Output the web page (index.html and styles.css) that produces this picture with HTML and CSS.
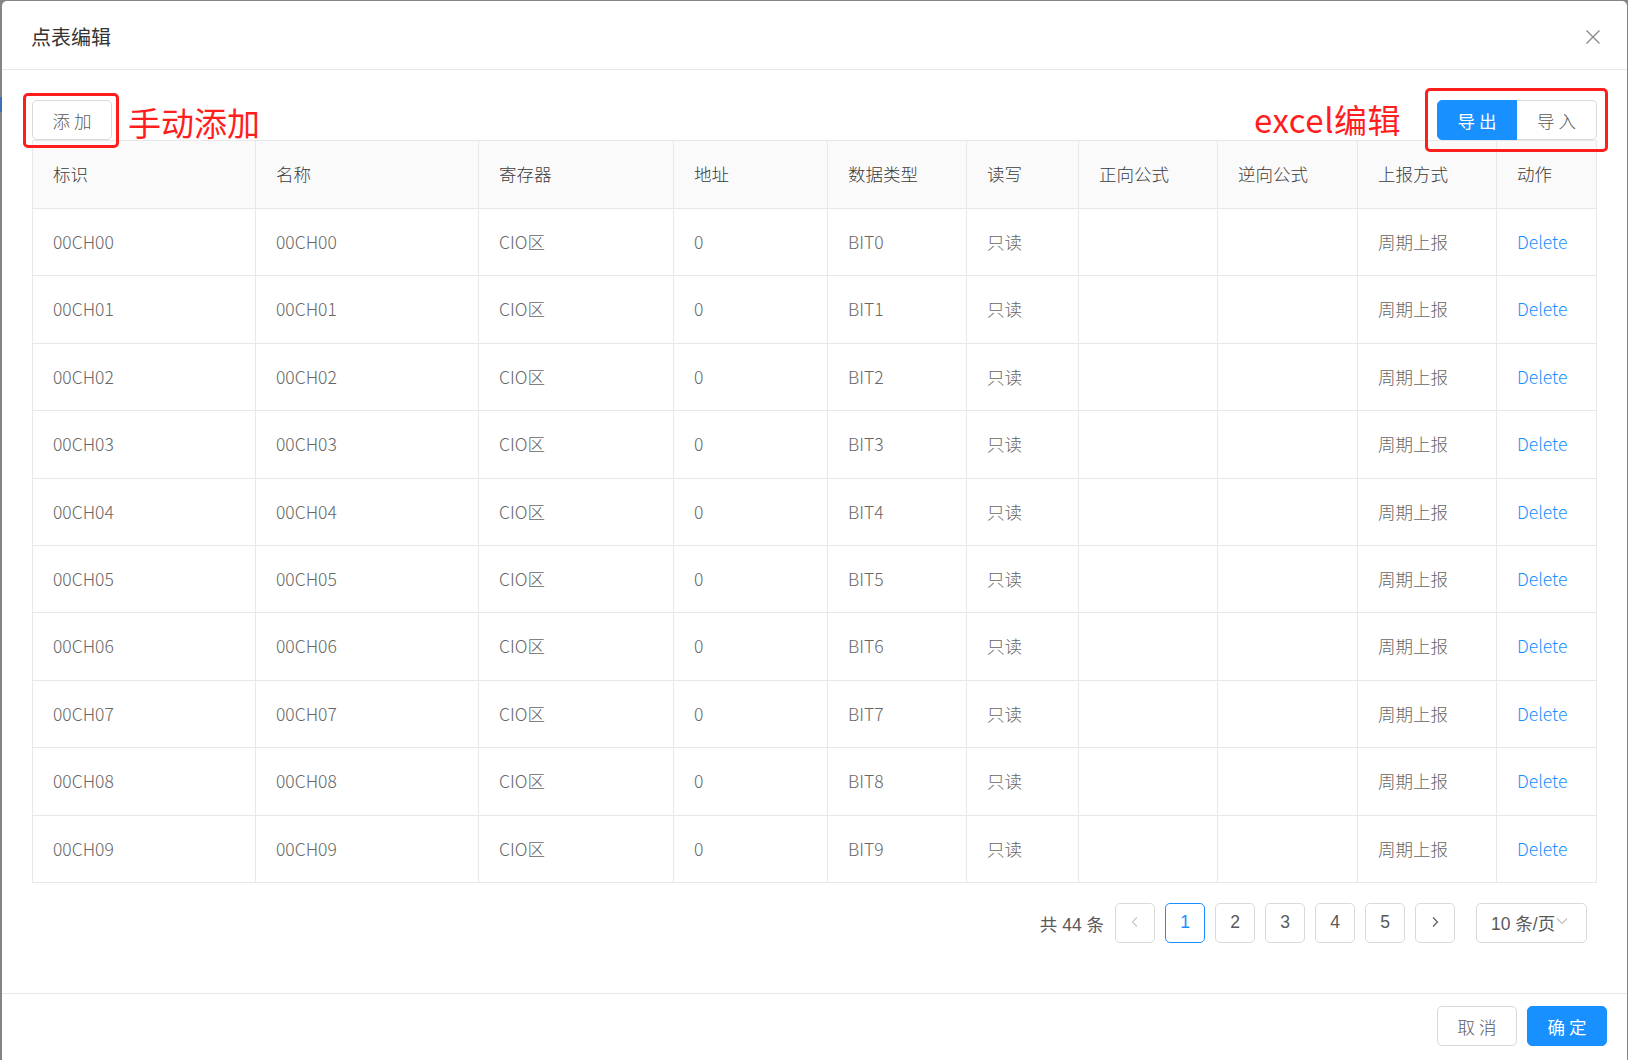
FILE: index.html
```html
<!DOCTYPE html>
<html lang="zh-CN">
<head>
<meta charset="utf-8">
<title>点表编辑</title>
<link rel="stylesheet" href="styles.css">
</head>
<body>
<span class="bg-link"></span>
<div class="modal">
  <div class="modal-header">
    <div class="modal-title">点表编辑</div>
    <button class="modal-close" aria-label="close">
      <svg width="16" height="16" viewBox="0 0 16 16"><path d="M1.5 1.5 L14.5 14.5 M14.5 1.5 L1.5 14.5" stroke="#8c8c8c" stroke-width="1.4" fill="none"/></svg>
    </button>
  </div>
  <div class="modal-body">
    <div class="toolbar">
      <button class="btn">添 加</button>
      <div class="btn-group">
        <button class="btn btn-primary">导 出</button>
        <button class="btn">导 入</button>
      </div>
    </div>
    <table class="grid">
      <colgroup>
        <col style="width:223px"><col style="width:223px"><col style="width:195px"><col style="width:154px"><col style="width:139px"><col style="width:112px"><col style="width:139px"><col style="width:140px"><col style="width:139px"><col>
      </colgroup>
      <thead>
        <tr><th>标识</th><th>名称</th><th>寄存器</th><th>地址</th><th>数据类型</th><th>读写</th><th>正向公式</th><th>逆向公式</th><th>上报方式</th><th>动作</th></tr>
      </thead>
      <tbody>
        <tr><td>00CH00</td><td>00CH00</td><td>CIO区</td><td>0</td><td>BIT0</td><td>只读</td><td></td><td></td><td>周期上报</td><td><a class="link">Delete</a></td></tr>
        <tr><td>00CH01</td><td>00CH01</td><td>CIO区</td><td>0</td><td>BIT1</td><td>只读</td><td></td><td></td><td>周期上报</td><td><a class="link">Delete</a></td></tr>
        <tr><td>00CH02</td><td>00CH02</td><td>CIO区</td><td>0</td><td>BIT2</td><td>只读</td><td></td><td></td><td>周期上报</td><td><a class="link">Delete</a></td></tr>
        <tr><td>00CH03</td><td>00CH03</td><td>CIO区</td><td>0</td><td>BIT3</td><td>只读</td><td></td><td></td><td>周期上报</td><td><a class="link">Delete</a></td></tr>
        <tr><td>00CH04</td><td>00CH04</td><td>CIO区</td><td>0</td><td>BIT4</td><td>只读</td><td></td><td></td><td>周期上报</td><td><a class="link">Delete</a></td></tr>
        <tr><td>00CH05</td><td>00CH05</td><td>CIO区</td><td>0</td><td>BIT5</td><td>只读</td><td></td><td></td><td>周期上报</td><td><a class="link">Delete</a></td></tr>
        <tr><td>00CH06</td><td>00CH06</td><td>CIO区</td><td>0</td><td>BIT6</td><td>只读</td><td></td><td></td><td>周期上报</td><td><a class="link">Delete</a></td></tr>
        <tr><td>00CH07</td><td>00CH07</td><td>CIO区</td><td>0</td><td>BIT7</td><td>只读</td><td></td><td></td><td>周期上报</td><td><a class="link">Delete</a></td></tr>
        <tr><td>00CH08</td><td>00CH08</td><td>CIO区</td><td>0</td><td>BIT8</td><td>只读</td><td></td><td></td><td>周期上报</td><td><a class="link">Delete</a></td></tr>
        <tr><td>00CH09</td><td>00CH09</td><td>CIO区</td><td>0</td><td>BIT9</td><td>只读</td><td></td><td></td><td>周期上报</td><td><a class="link">Delete</a></td></tr>
      </tbody>
    </table>
    <div class="pagination">
      <span class="total">共 44 条</span>
      <span class="page-item disabled">
        <svg width="12" height="14" viewBox="0 0 12 14"><path d="M8 2.5 L3.5 7 L8 11.5" stroke="currentColor" stroke-width="1.2" fill="none"/></svg>
      </span>
      <span class="page-item active">1</span>
      <span class="page-item">2</span>
      <span class="page-item">3</span>
      <span class="page-item">4</span>
      <span class="page-item">5</span>
      <span class="page-item">
        <svg width="12" height="14" viewBox="0 0 12 14"><path d="M4 2.5 L8.5 7 L4 11.5" stroke="currentColor" stroke-width="1.2" fill="none"/></svg>
      </span>
      <span class="size-changer">
        <span>10 条/页</span>
        <svg class="caret" width="12" height="8" viewBox="0 0 12 8"><path d="M1 1.5 L6 6.5 L11 1.5" stroke="#bfbfbf" stroke-width="1.1" fill="none"/></svg>
      </span>
    </div>
  </div>
  <div class="modal-footer">
    <button class="btn">取 消</button>
    <button class="btn btn-primary">确 定</button>
  </div>

  <div class="mark mark-add"></div>
  <div class="mark mark-excel"></div>
  <div class="note note-add">手动添加</div>
  <div class="note note-excel">excel编辑</div>
</div>
</body>
</html>
```

FILE: styles.css
```css
html, body {
  margin: 0;
  padding: 0;
  height: 100%;
}

body {
  background: #858585;
  font-family: "Noto Sans CJK SC", "Noto Sans", sans-serif;
  overflow: hidden;
  position: relative;
}

.bg-link {
  position: absolute;
  left: 0;
  top: 97px;
  width: 2px;
  height: 15px;
  background: #3d6fb4;
}

.modal {
  position: relative;
  margin: 1px 0 0 2px;
  width: 1625px;
  height: 1064px;
  background: #fff;
  border-radius: 5px;
  box-sizing: border-box;
}

.modal-header {
  display: flex;
  align-items: center;
  justify-content: space-between;
  padding: 21px 26px 19px 29px;
  border-bottom: 1px solid #e8e8e8;
  height: 69px;
  box-sizing: border-box;
}

.modal-title {
  font-size: 20px;
  line-height: 27px;
  color: #333;
}

.modal-close {
  border: 0;
  background: none;
  padding: 0;
  margin-top: 2px;
  display: flex;
  cursor: pointer;
}

.modal-body {
  padding: 30px 28px 30px 30px;
}

.toolbar {
  display: flex;
  justify-content: space-between;
  align-items: center;
  height: 40px;
  padding-right: 2px;
}

.btn {
  height: 40px;
  min-width: 80px;
  padding: 0 18px;
  font-family: inherit;
  font-size: 17.5px;
  font-weight: 300;
  color: #595959;
  background: #fff;
  border: 1px solid #d9d9d9;
  border-radius: 5px;
  box-sizing: border-box;
  cursor: pointer;
}

.btn-primary {
  background: #1890ff;
  border-color: #1890ff;
  color: #fff;
  font-weight: 400;
}

.btn-group {
  display: flex;
}

.btn-group .btn:first-child {
  border-top-right-radius: 0;
  border-bottom-right-radius: 0;
}

.btn-group .btn:last-child {
  border-top-left-radius: 0;
  border-bottom-left-radius: 0;
  border-left: 0;
}

.grid {
  width: 1565px;
  border-collapse: collapse;
  table-layout: fixed;
  font-size: 17.5px;
  border: 1px solid #e8e8e8;
}

.grid th,
.grid td {
  border: 1px solid #e8e8e8;
  padding: 20px 20px;
  text-align: left;
  line-height: 26.4px;
  white-space: nowrap;
}

.grid th {
  background: #fafafa;
  color: #3a3a3a;
  font-weight: 300;
  height: 27px;
}

.grid td {
  color: #666;
  font-weight: 300;
}

.link {
  color: #1890ff;
  cursor: pointer;
}

.pagination {
  display: flex;
  justify-content: flex-end;
  align-items: center;
  margin: 20px 0 20px;
  padding-right: 12px;
  font-family: "Liberation Sans", "Noto Sans CJK SC", sans-serif;
  font-size: 17.5px;
  color: #595959;
}

.total {
  margin-right: 11px;
}

.page-item {
  width: 40px;
  height: 40px;
  box-sizing: border-box;
  border: 1px solid #d9d9d9;
  border-radius: 5px;
  display: flex;
  align-items: center;
  justify-content: center;
  margin-right: 10px;
  padding-bottom: 2px;
  color: #595959;
}

.page-item.disabled {
  color: #c8c8c8;
}

.page-item.active {
  border-color: #1890ff;
  color: #1890ff;
}

.size-changer {
  margin-left: 11px;
  width: 111px;
  height: 40px;
  box-sizing: border-box;
  border: 1px solid #d9d9d9;
  border-radius: 5px;
  display: flex;
  align-items: center;
  padding: 0 0 2px 14px;
  color: #595959;
}

.caret {
  margin-left: 1px;
  margin-top: -3px;
}

.modal-footer {
  border-top: 1px solid #e8e8e8;
  padding: 12px 20px;
  display: flex;
  justify-content: flex-end;
  gap: 10px;
}

.mark {
  position: absolute;
  border: 3px solid #ff1e1e;
  border-radius: 5px;
  box-sizing: border-box;
}

.mark-add {
  left: 21px;
  top: 92px;
  width: 96px;
  height: 55px;
}

.mark-excel {
  left: 1423px;
  top: 87px;
  width: 183px;
  height: 64px;
}

.note {
  position: absolute;
  color: #ff1e1e;
  font-size: 33px;
  line-height: 40px;
  white-space: nowrap;
}

.note-add {
  left: 126px;
  top: 101px;
}

.note-excel {
  left: 1252px;
  top: 98px;
  letter-spacing: 0.5px;
}
```
